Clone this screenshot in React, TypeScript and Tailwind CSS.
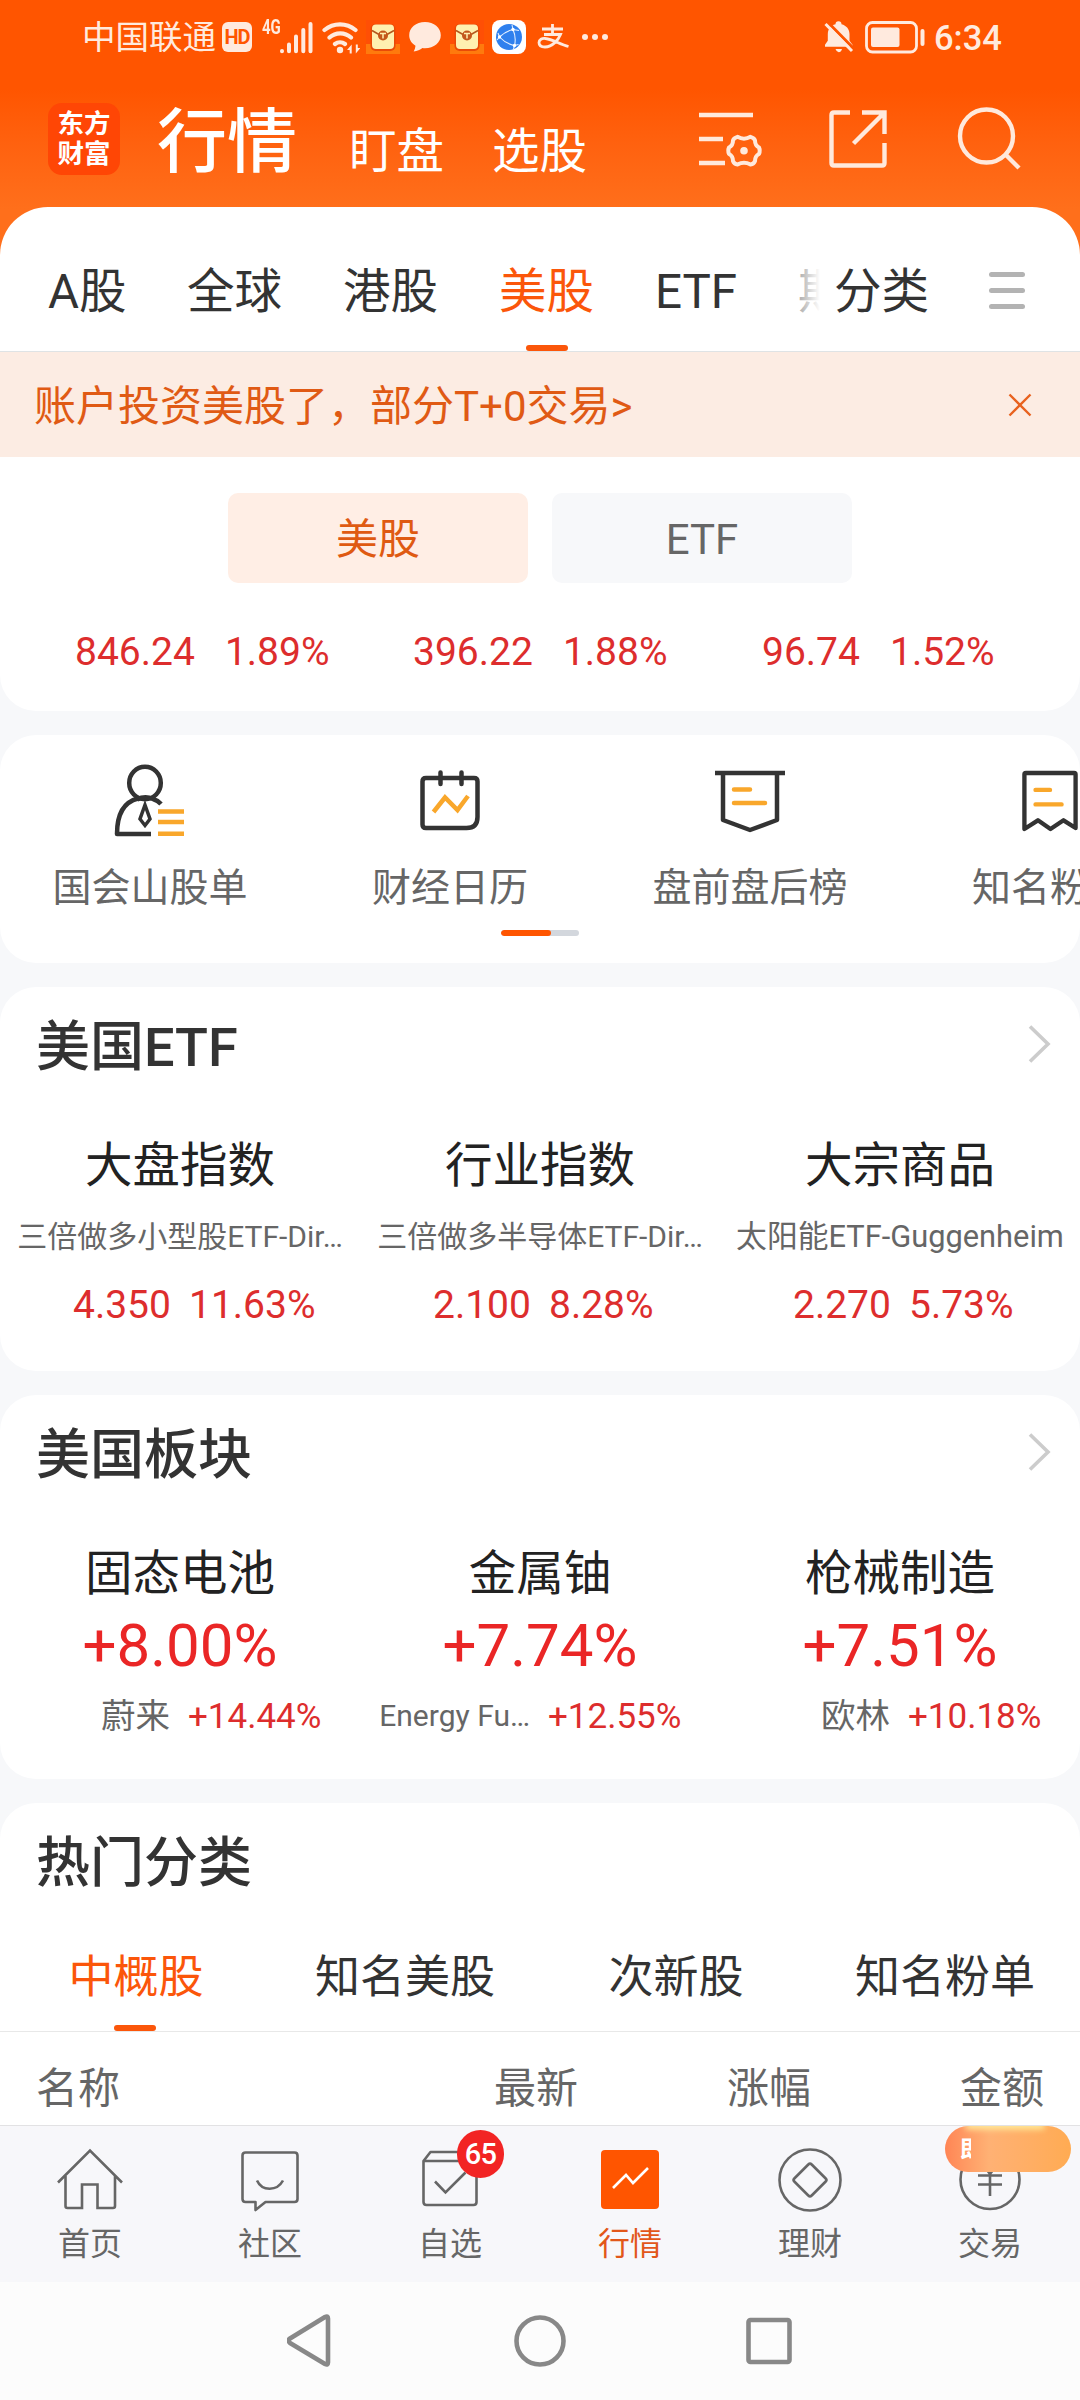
import React from "react";

const marketTabs = [
  { label: "A股", box: "w-[141px] pl-12" },
  { label: "全球", box: "w-[156px] pl-[46px]" },
  { label: "港股", box: "w-[156px] pl-[46px]" },
  { label: "美股", box: "w-[156px] pl-[46px]", active: true },
  { label: "ETF", box: "w-[144px] pl-[46px]" },
];

const indexes = [
  { price: "846.24", rate: "1.89%", box: "left-[75px]" },
  { price: "396.22", rate: "1.88%", box: "left-[413px]" },
  { price: "96.74", rate: "1.52%", box: "left-[762px]" },
];

const etfs = [
  { name: "大盘指数", fund: "三倍做多小型股ETF-Dir…", price: "4.350", rate: "11.63%" },
  { name: "行业指数", fund: "三倍做多半导体ETF-Dir…", price: "2.100", rate: "8.28%" },
  { name: "大宗商品", fund: "太阳能ETF-Guggenheim", price: "2.270", rate: "5.73%", wide: true },
];

const sectors = [
  { name: "固态电池", rate: "+8.00%", stock: "蔚来", stockRate: "+14.44%" },
  { name: "金属铀", rate: "+7.74%", stock: "Energy Fu…", stockRate: "+12.55%", small: true },
  { name: "枪械制造", rate: "+7.51%", stock: "欧林", stockRate: "+10.18%" },
];

/* ---------- status bar icons ---------- */

function SignalIcon() {
  return (
    <svg width="34" height="33" viewBox="0 0 34 33" stroke="#ffeade" strokeWidth="4" strokeLinecap="round">
      <path d="M3 30v.2M10 23.500v6.700M17 15.500v14.700M24.300 9v21.200M31.500 3v27.200" />
    </svg>
  );
}

function WifiIcon() {
  return (
    <svg width="38" height="33" viewBox="0 0 38 33" fill="none" stroke="#ffeade" strokeWidth="4.200" strokeLinecap="round">
      <path d="M2.500 9a24 24 0 0 1 31 0M7.500 16.500a16 16 0 0 1 21.500 0M13 23a8 8 0 0 1 10 0" />
      <circle cx="18" cy="29" r="3.200" fill="#ffeade" stroke="none" />
      <path d="M25 29l4.700-5.500v9h-2V29zM38.500 27l-4.700 5.500v-9h2V27z" fill="#ffeade" stroke="none" />
    </svg>
  );
}

function EnvelopeIcon() {
  return (
    <svg width="34" height="34" viewBox="0 0 34 34">
      <rect width="34" height="34" fill="#ff4f05" />
      <rect y="24" width="34" height="10" fill="#ff7a0d" />
      <rect x="4.500" y="4" width="25" height="27" rx="5" fill="#e94a08" />
      <rect x="6" y="4.500" width="22" height="24.500" rx="4" fill="#fff0b0" />
      <path d="M6 10.500l7 4M28 10.500l-7 4" stroke="#b4571d" strokeWidth="1.500" />
      <circle cx="17" cy="15.500" r="5" fill="#c4571c" />
      <path d="M14 13.500h6M17 13.500v5" stroke="#fff0b0" strokeWidth="1.500" />
    </svg>
  );
}

function BubbleIcon() {
  return (
    <svg width="34" height="32" viewBox="0 0 34 32" fill="#ffeade">
      <path d="M17 1C8 1 1.200 6.800 1.200 14.200c0 4.700 2.700 8.200 6.300 10.500-.2 2-.8 4-1.800 5.800 3.500-.3 6.500-1.600 8.700-3.500.8.100 1.700.2 2.600.2 9 0 15.800-5.700 15.800-13S26 1 17 1z" />
    </svg>
  );
}

function GlobeIcon() {
  return (
    <svg width="34" height="34" viewBox="0 0 34 34">
      <rect width="34" height="34" rx="8" fill="#fff" />
      <circle cx="17" cy="17" r="13" fill="#2f80ee" />
      <g fill="none" stroke="#e3efff" strokeWidth="1.100">
        <path d="M7.500 17Q14 11 21 9.500M7.500 17q6 6.500 15 8.500M21 9.500q3.500 8 1.500 16M5 20l2.500-3L6 13M21 9.500L20 5M21 9.500l6 1M22.500 25.500l4-1M22.500 25.500l-1 3.500" />
      </g>
      <g fill="#fff">
        <circle cx="7.500" cy="17" r="1.700" />
        <circle cx="21" cy="9.500" r="1.700" />
        <circle cx="22.500" cy="25.500" r="1.700" />
      </g>
    </svg>
  );
}

function AlipayIcon() {
  return (
    <svg width="32" height="26" viewBox="0 0 32 26" fill="none" stroke="#ffeade" strokeWidth="2.800">
      <path d="M5 5h21M15.500 0v10.500" />
      <path d="M7 10.500h16.500c-2 5-8 12.500-15.500 12.500-3.500 0-6-1.500-6-4.500s3-4.500 6.500-4c7 .8 14 5.500 23 8" />
    </svg>
  );
}

function MutedBellIcon() {
  return (
    <svg width="30" height="32" viewBox="0 0 30 32">
      <path d="M11.500 3.200a3 3 0 0 1 6 0c5 1.300 8 5 8 10v6.500l3 4v2H1v-2l2.800-4V13.200c0-5 2.700-8.700 7.700-10zM11.500 28h6.500q-1 3.200-3.200 3.200T11.500 28z" fill="#ffeade" />
      <path d="M3.500 1L30 28" stroke="#ff5500" strokeWidth="3" />
      <path d="M1.500 3L28 30" stroke="#ffeade" strokeWidth="3" />
    </svg>
  );
}

function BatteryIcon() {
  return (
    <svg width="61" height="33" viewBox="0 0 61 33">
      <rect x="1.500" y="1.500" width="50" height="29.500" rx="6" fill="none" stroke="#ffeade" strokeWidth="2.800" />
      <rect x="6" y="6.500" width="28.500" height="19.500" rx="2" fill="#ffeade" />
      <rect x="55.500" y="8" width="4" height="17" rx="2" fill="#ffeade" />
    </svg>
  );
}

/* ---------- header icons ---------- */

function ListSettingIcon() {
  return (
    <svg width="64" height="64" viewBox="0 0 64 64" fill="none" stroke="#ffe9dc" strokeWidth="4.600">
      <path d="M0 8h54M0 32h24M0 56h26" />
      <path
        d="M38.500 29.800Q45 33.500 51.500 29.800Q55.500 31 56 33.500Q56 38.500 60 40.500Q61.500 43.500 60 47Q56 49 56 54Q55 57 51.500 57.500Q45 54 38.500 57.500Q35 57 34 54Q34 49 30 47Q28.500 43.500 30 40.500Q34 38.500 34 33.500Q34.500 31 38.500 29.800z"
        strokeWidth="4"
        strokeLinejoin="round"
      />
      <circle cx="45" cy="43.700" r="3.800" fill="#ffe9dc" stroke="none" />
    </svg>
  );
}

function ShareIcon() {
  return (
    <svg width="60" height="60" viewBox="0 0 60 60" fill="none" stroke="#ffe9dc" strokeWidth="4.400">
      <path d="M22 3.500H6q-2.500 0-2.500 2.500v48q0 2.500 2.500 2.500h48q2.500 0 2.500-2.500V34M34 3.500h22.500V25M56 4L25.500 34.500" />
    </svg>
  );
}

function SearchIcon() {
  return (
    <svg width="64" height="66" viewBox="0 0 64 66" fill="none" stroke="#ffe9dc" strokeWidth="4.400">
      <circle cx="29.500" cy="31" r="26.500" />
      <path d="M48 49l14 14" />
    </svg>
  );
}

/* ---------- shortcut icons ---------- */

function SenatorIcon() {
  return (
    <svg width="72" height="74" viewBox="0 0 72 74" fill="none" stroke="#333" strokeWidth="4.500">
      <ellipse cx="31" cy="19" rx="15.800" ry="16.200" />
      <path d="M24 34.500C10 38 3 49 3 70h34" strokeLinejoin="round" />
      <path d="M23 35.500q8-4 16-.5 5 1.500 8 5" />
      <path d="M31 41l5 14-5 6.500L26 55z" strokeWidth="3.500" />
      <path d="M44 47.500h26M44 58h26M44 69.700h26" stroke="#f9a72b" strokeWidth="4.600" />
    </svg>
  );
}

function CalendarIcon() {
  return (
    <svg width="62" height="64" viewBox="0 0 62 64" fill="none" stroke="#333" strokeWidth="4.500" strokeLinecap="round">
      <path d="M7 9h48q3.500 0 3.500 3.500V48q0 11-11 11H7q-3.500 0-3.500-3.500v-43Q3.500 9 7 9z" />
      <path d="M21.500 3.500v11.500M42.500 3.500v11.500" />
      <path d="M14.500 43l11.500-14.500L38.500 41 49 27" stroke="#f9a72b" strokeLinecap="butt" />
    </svg>
  );
}

function PennantIcon() {
  return (
    <svg width="72" height="66" viewBox="0 0 72 66" fill="none" stroke="#333" strokeWidth="4.500">
      <path d="M1 5h70" />
      <path d="M9 5v47l27 10 27-10V5" strokeLinejoin="round" />
      <path d="M20 21.500h16M20 35h31" stroke="#f9a72b" strokeLinecap="round" />
    </svg>
  );
}

function ReceiptIcon() {
  return (
    <svg width="56" height="66" viewBox="0 0 58 66" fill="none" stroke="#333" strokeWidth="4.500" strokeLinejoin="round">
      <path d="M2.500 5.500Q2.500 4 4 4h50q1.500 0 1.500 1.500V61L43 53l-13.500 9L16.500 53l-14 9z" />
      <path d="M14 21.500h15M14 36.500h27" stroke="#f9a72b" strokeLinecap="round" />
    </svg>
  );
}

const shortcuts = [
  { label: "国会山股单", icon: <SenatorIcon /> },
  { label: "财经日历", icon: <CalendarIcon /> },
  { label: "盘前盘后榜", icon: <PennantIcon /> },
  { label: "知名粉单", icon: <ReceiptIcon /> },
];

/* ---------- bottom tab icons, all on a 70x70 box ---------- */

const tabSvg = {
  width: 70,
  height: 70,
  viewBox: "0 0 70 70",
  fill: "none",
  stroke: "#666",
  strokeWidth: 2.6,
};

const bottomTabs = [
  {
    label: "首页",
    icon: (
      <svg {...tabSvg}>
        <path d="M3 38.500L35 6.500l32 32M10.500 32v30q0 2 2 2H27V40.500h15.500V64H58q2 0 2-2V32" />
      </svg>
    ),
  },
  {
    label: "社区",
    icon: (
      <svg {...tabSvg}>
        <path d="M10.500 8.500h49q3 0 3 3V55q0 3-3 3H30.500l-10 8v-8h-10q-3 0-3-3V11.500q0-3 3-3z" strokeLinejoin="round" />
        <path d="M22 36.500c5 11 20 11 26 0" />
      </svg>
    ),
  },
  {
    label: "自选",
    badge: "65",
    icon: (
      <svg {...tabSvg}>
        <path d="M8.500 17h53v41q0 3-3 3h-47q-3 0-3-3zl7-9h46" strokeLinejoin="round" />
        <path d="M20 37.500l10.500 11 20-20" />
      </svg>
    ),
  },
  {
    label: "行情",
    active: true,
    icon: (
      <svg {...tabSvg}>
        <rect x="6" y="6" width="58" height="59" rx="4" fill="#ff5500" stroke="none" />
        <path d="M18 44l13-13 7 8 15-15" stroke="#fff" />
      </svg>
    ),
  },
  {
    label: "理财",
    icon: (
      <svg {...tabSvg}>
        <circle cx="35" cy="36" r="30.500" />
        <path d="M33.300 20.500q1.700-1.700 3.400 0l14 14q1.500 1.500 0 3l-14 14q-1.700 1.700-3.400 0l-14-14q-1.500-1.500 0-3z" />
      </svg>
    ),
  },
  {
    label: "交易",
    promo: true,
    icon: (
      <svg {...tabSvg}>
        <circle cx="35" cy="35.500" r="29.500" />
        <path d="M23 31.500h24M23 40.500h24M35 30v22M27 19l8 11 8-11" />
      </svg>
    ),
  },
];

function Chevron() {
  return (
    <svg className="-mt-1" width="24" height="38" viewBox="0 0 24 38" fill="none" stroke="#ccc" strokeWidth="3.600">
      <path d="M2 1.500L20 19 2 36.500" />
    </svg>
  );
}

function SectionTitle({ title, more }: { title: string; more?: boolean }) {
  return (
    <div className="flex h-[118px] items-center justify-between pl-9 pr-7 text-[54px] font-medium text-[#333]">
      <h2 className="mt-1">{title}</h2>
      {more && <Chevron />}
    </div>
  );
}

export default function App() {
  return (
    <div className="flex h-[2400px] w-[1080px] flex-col overflow-hidden bg-[#f7f8fa] font-['Roboto','Noto_Sans_CJK_SC',sans-serif] leading-none whitespace-nowrap">
      {/* header */}
      <header className="-mb-12 h-[255px] shrink-0 bg-linear-to-b from-[#ff5500] from-35% to-[#ff6f1b] to-82%">
        <div className="flex h-[74px] items-center pl-[82px] text-[#ffeade]">
          <span className="mt-[2px] w-[140px] text-[33.500px]">中国联通</span>
          <span className="flex h-[30px] w-[30px] items-center justify-center rounded-md bg-[#ffeade] text-[20px] font-bold tracking-tighter text-[#ff5500]">
            HD
          </span>
          <span className="mb-5 ml-[10px] w-[17px] origin-left scale-x-75 text-[20px] font-bold">4G</span>
          <SignalIcon />
          <span className="ml-[9px]"><WifiIcon /></span>
          <span className="ml-[6px]"><EnvelopeIcon /></span>
          <span className="ml-2"><BubbleIcon /></span>
          <span className="ml-2"><EnvelopeIcon /></span>
          <span className="ml-2"><GlobeIcon /></span>
          <span className="ml-[11px]"><AlipayIcon /></span>
          <span className="ml-[13px] flex gap-[4px]">
            <i className="size-[6px] rounded-full bg-[#ffeade]" />
            <i className="size-[6px] rounded-full bg-[#ffeade]" />
            <i className="size-[6px] rounded-full bg-[#ffeade]" />
          </span>
          <span className="ml-auto"><MutedBellIcon /></span>
          <span className="ml-[11px]"><BatteryIcon /></span>
          <span className="mt-[2px] mr-[79px] ml-2 w-[67px] text-[34.500px] font-medium">6:34</span>
        </div>
        <div className="flex h-[133px] items-start text-white">
          <div className="mt-[29px] ml-12 flex h-[72px] w-[72px] flex-col items-center justify-center gap-[3px] rounded-[14px] bg-[#ff4605] text-[26.500px] font-bold">
            <span>东方</span>
            <span>财富</span>
          </div>
          <h1 className="mt-[34px] ml-[37px] w-[192px] text-[70px] font-medium">行情</h1>
          <span className="mt-[55px] w-[143px] text-[47.500px]">盯盘</span>
          <span className="mt-[55px] w-[207px] text-[47.500px]">选股</span>
          <span className="mt-[33px]"><ListSettingIcon /></span>
          <span className="mt-[35px] ml-[65px]"><ShareIcon /></span>
          <span className="mt-[31px] ml-[69px]"><SearchIcon /></span>
        </div>
      </header>

      {/* market tabs, notice and indexes */}
      <section className="h-[504px] shrink-0 overflow-hidden rounded-t-[48px] rounded-b-[36px] bg-white">
        <nav className="flex h-[145px] items-center border-b border-[#dfe3e5] pt-[27px] text-[47.500px] text-[#333]">
          {marketTabs.map((tab) => (
            <div key={tab.label} className={`relative ${tab.box} ${tab.active ? "text-[#fb560a]" : ""}`}>
              {tab.label}
              {tab.active && <i className="absolute top-[76px] left-[73px] h-[6px] w-[42px] rounded-full bg-[#fb560a]" />}
            </div>
          ))}
          <div className="relative ml-[45px] w-[22px] overflow-hidden text-[#aaa]">
            期
            <i className="absolute inset-0 bg-linear-to-r from-transparent to-white" />
          </div>
          <span className="ml-[14px] w-[155px]">分类</span>
          <div className="-mt-1 flex w-9 flex-col gap-[11px]">
            <i className="h-[5px] rounded-full bg-[#b3b3b3]" />
            <i className="h-[5px] rounded-full bg-[#b3b3b3]" />
            <i className="h-[5px] rounded-full bg-[#b3b3b3]" />
          </div>
        </nav>

        <div className="flex h-[105px] items-center justify-between bg-[#fcece3] pr-12 pl-[34px] text-[42px] text-[#e05a14]">
          <p className="mt-[5px]">账户投资美股了，部分T+0交易&gt;</p>
          <svg width="24" height="24" viewBox="0 0 24 24" stroke="#e8621f" strokeWidth="2.400">
            <path d="M1.500 1.500l21 21M22.500 1.500l-21 21" />
          </svg>
        </div>

        <div className="mt-9 flex justify-center gap-6 text-[42px]">
          <div className="flex h-[90px] w-[300px] items-center justify-center rounded-[10px] bg-[#ffeee5] pt-1 text-[#df5a12]">美股</div>
          <div className="flex h-[90px] w-[300px] items-center justify-center rounded-[10px] bg-[#f7f8fa] pt-1 text-[#666]">ETF</div>
        </div>

        <div className="relative mt-[50px] h-10 text-[39px] text-[#dd2d2d]">
          {indexes.map((item) => (
            <div key={item.price} className={`absolute flex gap-[30px] ${item.box}`}>
              <span>{item.price}</span>
              <span>{item.rate}</span>
            </div>
          ))}
        </div>
      </section>

      {/* shortcuts */}
      <section className="mt-6 h-[228px] shrink-0 overflow-hidden rounded-[36px] bg-white">
        <div className="flex h-[195px]">
          {shortcuts.map((item) => (
            <div key={item.label} className="flex w-[300px] shrink-0 flex-col items-center pt-[29px]">
              <div className="flex h-[74px] items-center">{item.icon}</div>
              <span className="mt-[31px] text-[39px] text-[#666]">{item.label}</span>
            </div>
          ))}
        </div>
        <div className="mx-auto h-[6px] w-[78px] overflow-hidden rounded-full bg-[#d3d7dd]">
          <div className="h-full w-[50px] rounded-full bg-[#ff5500]" />
        </div>
      </section>

      {/* ETFs */}
      <section className="mt-6 h-[384px] shrink-0 rounded-[36px] bg-white">
        <SectionTitle title="美国ETF" more />
        <div className="grid grid-cols-3">
          {etfs.map((etf) => (
            <div key={etf.name} className="flex flex-col items-center">
              <h3 className="mt-[38px] h-[48px] text-[47.500px] text-[#222]">{etf.name}</h3>
              <p className={`mt-[31px] h-[30px] text-[#666] ${etf.wide ? "text-[30.800px]" : "text-[30px]"}`}>{etf.fund}</p>
              <div className="mt-[34px] flex gap-[18px] self-start pl-[73px] text-[39px] text-[#dd2d2d]">
                <span>{etf.price}</span>
                <span>{etf.rate}</span>
              </div>
            </div>
          ))}
        </div>
      </section>

      {/* sectors */}
      <section className="mt-6 h-[384px] shrink-0 rounded-[36px] bg-white">
        <SectionTitle title="美国板块" more />
        <div className="grid grid-cols-3">
          {sectors.map((sector) => (
            <div key={sector.name} className="flex flex-col items-center">
              <h3 className="mt-[38px] h-[48px] text-[47.500px] text-[#222]">{sector.name}</h3>
              <p className="mt-[17px] text-[60px] text-[#ea2626]">{sector.rate}</p>
              <div className="mt-[22px] flex h-[36px] w-full items-center text-[35px] text-[#dd2d2d]">
                <span className={`w-[170px] text-right text-[#666] ${sector.small ? "text-[30px]" : "text-[34.500px]"}`}>{sector.stock}</span>
                <span className="ml-[18px]">{sector.stockRate}</span>
              </div>
            </div>
          ))}
        </div>
      </section>

      {/* hot categories */}
      <section className="mt-6 h-[322px] shrink-0 rounded-t-[36px] bg-white">
        <SectionTitle title="热门分类" />
        <div className="grid h-[111px] grid-cols-4 border-b border-[#e8e8e8] pt-[34px] text-center text-[45px] text-[#333]">
          <div className="relative pl-[2px] text-[#fb560a]">
            中概股
            <i className="absolute top-[70px] left-[114px] h-[6px] w-[42px] rounded-full bg-[#fb560a]" />
          </div>
          <div>知名美股</div>
          <div className="pl-[2px]">次新股</div>
          <div>知名粉单</div>
        </div>
        <div className="flex h-[93px] items-center pt-5 pr-9 pl-9 text-[42px] text-[#666]">
          <span className="mr-auto">名称</span>
          <span className="w-[233px]">最新</span>
          <span className="w-[233px]">涨幅</span>
          <span>金额</span>
        </div>
      </section>

      {/* bottom tab bar */}
      <footer className="grid h-[157px] shrink-0 grid-cols-6 border-t border-[#e2e2e4] bg-[#f7f7fa]">
        {bottomTabs.map((tab) => (
          <div key={tab.label} className="relative flex flex-col items-center pt-[18px]">
            {tab.icon}
            <span className={`mt-[14px] text-[32px] ${tab.active ? "text-[#e2571a]" : "text-[#666]"}`}>{tab.label}</span>
            {tab.badge && (
              <b className="absolute top-1 left-[97px] flex h-[48px] w-[47px] items-center justify-center rounded-full bg-[#f22424] pt-px text-[29px] font-medium tracking-tight text-white">
                {tab.badge}
              </b>
            )}
            {tab.promo && (
              <div className="absolute top-0 left-[45px] h-[46px] w-[126px] overflow-hidden rounded-[23px] bg-linear-to-r from-[#ff8555] via-[#ffb174] via-35% to-[#ffab52]">
                <i className="absolute -top-1 left-5 h-[7px] w-[80px] rounded-full bg-[#fff3a0] blur-[3px]" />
                <span className="absolute top-[12px] left-[15px] w-[11px] overflow-hidden text-[23px] font-bold text-white">
                  即
                </span>
              </div>
            )}
          </div>
        ))}
      </footer>

      {/* android navigation */}
      <div className="relative flex flex-1 items-center justify-center bg-[#fcfcfc]">
        <svg width="506" height="54" viewBox="0 0 506 54" fill="none" stroke="#888" strokeWidth="4.600" strokeLinejoin="round">
          <path d="M41 4.500q0-3-3-1.500L3 24.500q-3 2-0 4.500L38 50q3 1.500 3-1.500z" />
          <circle cx="253" cy="27" r="23.500" />
          <rect x="461.500" y="6" width="41" height="42" rx="2" />
        </svg>
      </div>
    </div>
  );
}
